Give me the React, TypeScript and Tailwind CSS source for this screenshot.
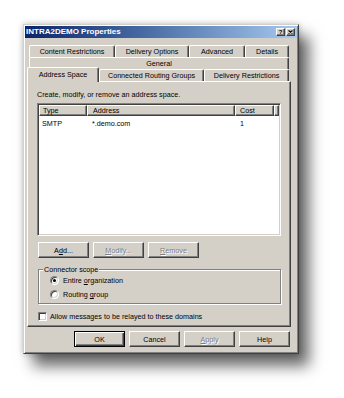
import React from 'react';

const raised =
  'bg-[#d4d0c8] border border-t-white border-l-white border-r-[#404040] border-b-[#404040] shadow-[inset_-1px_-1px_0_#808080]';

const tab =
  'flex items-center justify-center bg-[#d4d0c8] border-l border-t border-r border-l-white border-t-white border-r-[#404040] rounded-t-[2px] shadow-[inset_-1px_0_0_#808080] whitespace-nowrap';

const disabledText = 'text-[#808080] [text-shadow:1px_1px_0_#fff]';

const Btn: React.FC<{ children: React.ReactNode; disabled?: boolean; def?: boolean }> = ({ children, disabled, def }) => (
  <div
    className={
      def
        ? 'w-[51px] h-[16px] flex items-center justify-center bg-[#d4d0c8] border border-black shadow-[inset_1px_1px_0_#fff,inset_-1px_-1px_0_#404040,inset_-2px_-2px_0_#808080]'
        : `w-[51px] h-[16px] flex items-center justify-center ${raised} ${disabled ? disabledText : ''}`
    }
  >
    {children}
  </div>
);

const Radio: React.FC<{ checked?: boolean; children: React.ReactNode }> = ({ checked, children }) => (
  <div className="flex items-center gap-[4px] h-[9px]">
    <span className="w-[9px] h-[9px] rounded-full bg-white border border-t-[#808080] border-l-[#808080] border-r-white border-b-white shadow-[inset_1px_1px_0_#404040,inset_-1px_-1px_0_#d4d0c8] flex items-center justify-center">
      {checked && <span className="w-[3px] h-[3px] rounded-full bg-black" />}
    </span>
    <span>{children}</span>
  </div>
);

export default function App() {
  return (
    <div className="w-[344px] h-[398px] bg-white overflow-hidden font-['Liberation_Sans',Arial,sans-serif] text-[7.2px] leading-[9px] text-black">
      <div className="ml-[23px] mt-[24px] w-[276px] h-[330px] bg-[#d4d0c8] border border-t-[#d4d0c8] border-l-[#d4d0c8] border-r-[#404040] border-b-[#404040] p-[1px] shadow-[inset_1px_1px_0_#fff,inset_-1px_-1px_0_#808080,10px_12px_14px_rgba(0,0,0,0.6),0_0_6px_rgba(0,0,0,0.25)]">
        {/* title bar */}
        <div className="h-[12px] flex items-center justify-between bg-linear-to-r from-[#0a246a] to-[#a6caf0] pl-[1px] pr-[2px]">
          <span className="text-white font-bold text-[8px] leading-[10px]">INTRA2DEMO Properties</span>
          <div className="flex gap-[1px]">
            <div className={`w-[9px] h-[8px] flex items-center justify-center ${raised}`}>
              <span className="font-bold text-[6px] leading-[6px]">?</span>
            </div>
            <div className={`w-[9px] h-[8px] flex items-center justify-center ${raised}`}>
              <svg width="5" height="4" viewBox="0 0 5 4">
                <path d="M0.5 0.5 L4.5 3.5 M4.5 0.5 L0.5 3.5" stroke="#000" strokeWidth="1.1" />
              </svg>
            </div>
          </div>
        </div>

        {/* tabs */}
        <div className="ml-[2px] mt-[7px] w-[264px]">
          <div className="flex pl-[2px] h-[12px]">
            <div className={`${tab} w-[86px]`}>Content Restrictions</div>
            <div className={`${tab} w-[74px]`}>Delivery Options</div>
            <div className={`${tab} w-[56px]`}>Advanced</div>
            <div className={`${tab} w-[44px]`}>Details</div>
          </div>
          <div className="flex pl-[2px] h-[12px]">
            <div className={`${tab} w-[260px]`}>General</div>
          </div>
          <div className="flex items-end h-[12px]">
            <div className={`${tab} w-[72px] h-[15px] mb-[-1px] relative z-10 pb-[1px]`}>Address Space</div>
            <div className={`${tab} w-[105px] h-[12px]`}>Connected Routing Groups</div>
            <div className={`${tab} w-[85px] h-[12px]`}>Delivery Restrictions</div>
          </div>

          {/* panel */}
          <div className="w-[264px] h-[246px] border border-t-white border-l-white border-r-[#404040] border-b-[#404040] shadow-[inset_-1px_-1px_0_#808080] pl-[9px] pt-[8px]">
            <div className="h-[9px]">Create, modify, or remove an address space.</div>

            <div className="mt-[4px] w-[244px] h-[133px] bg-white border border-t-[#808080] border-l-[#808080] border-r-white border-b-white shadow-[inset_1px_1px_0_#404040,inset_-1px_-1px_0_#d4d0c8] p-[1px]">
              <div className="flex h-[11px]">
                <div className={`w-[48px] pl-[3px] flex items-center ${raised}`}>Type</div>
                <div className={`w-[148px] pl-[5px] flex items-center ${raised}`}>Address</div>
                <div className={`w-[39px] pl-[4px] flex items-center ${raised}`}>Cost</div>
                <div className={`flex-1 ${raised}`} />
              </div>
              <div className="flex h-[9px] mt-[3px]">
                <div className="w-[48px] pl-[3px]">SMTP</div>
                <div className="w-[148px] pl-[5px]">*.demo.com</div>
                <div className="w-[39px] pl-[5px]">1</div>
              </div>
            </div>

            <div className="mt-[6px] flex gap-[4px] pl-[1px]">
              <Btn>
                A<span className="underline">d</span>d...
              </Btn>
              <Btn disabled>
                <span className="underline">M</span>odify...
              </Btn>
              <Btn disabled>
                <span className="underline">R</span>emove
              </Btn>
            </div>

            <div className="mt-[11px] ml-[1px] relative w-[243px] h-[35px] border border-[#808080] shadow-[inset_1px_1px_0_#fff,1px_1px_0_#fff] pt-[6px] pl-[11px] flex flex-col gap-[5px]">
              <span className="absolute top-[-5px] left-[4px] bg-[#d4d0c8] px-[1px]">Connector scope</span>
              <Radio checked>
                Entire <span className="underline">o</span>rganization
              </Radio>
              <Radio>
                Routing <span className="underline">g</span>roup
              </Radio>
            </div>

            <div className="mt-[8px] flex items-center gap-[3px] pl-[1px] h-[9px]">
              <span className="w-[9px] h-[9px] bg-white border border-t-[#808080] border-l-[#808080] border-r-white border-b-white shadow-[inset_1px_1px_0_#404040,inset_-1px_-1px_0_#d4d0c8]" />
              <span>Allow messages to be relayed to these domains</span>
            </div>
          </div>

          {/* dialog buttons */}
          <div className="mt-[4px] flex justify-end gap-[4px] pr-[1px]">
            <Btn def>OK</Btn>
            <Btn>Cancel</Btn>
            <Btn disabled>
              <span className="underline">A</span>pply
            </Btn>
            <Btn>Help</Btn>
          </div>
        </div>
      </div>
    </div>
  );
}
